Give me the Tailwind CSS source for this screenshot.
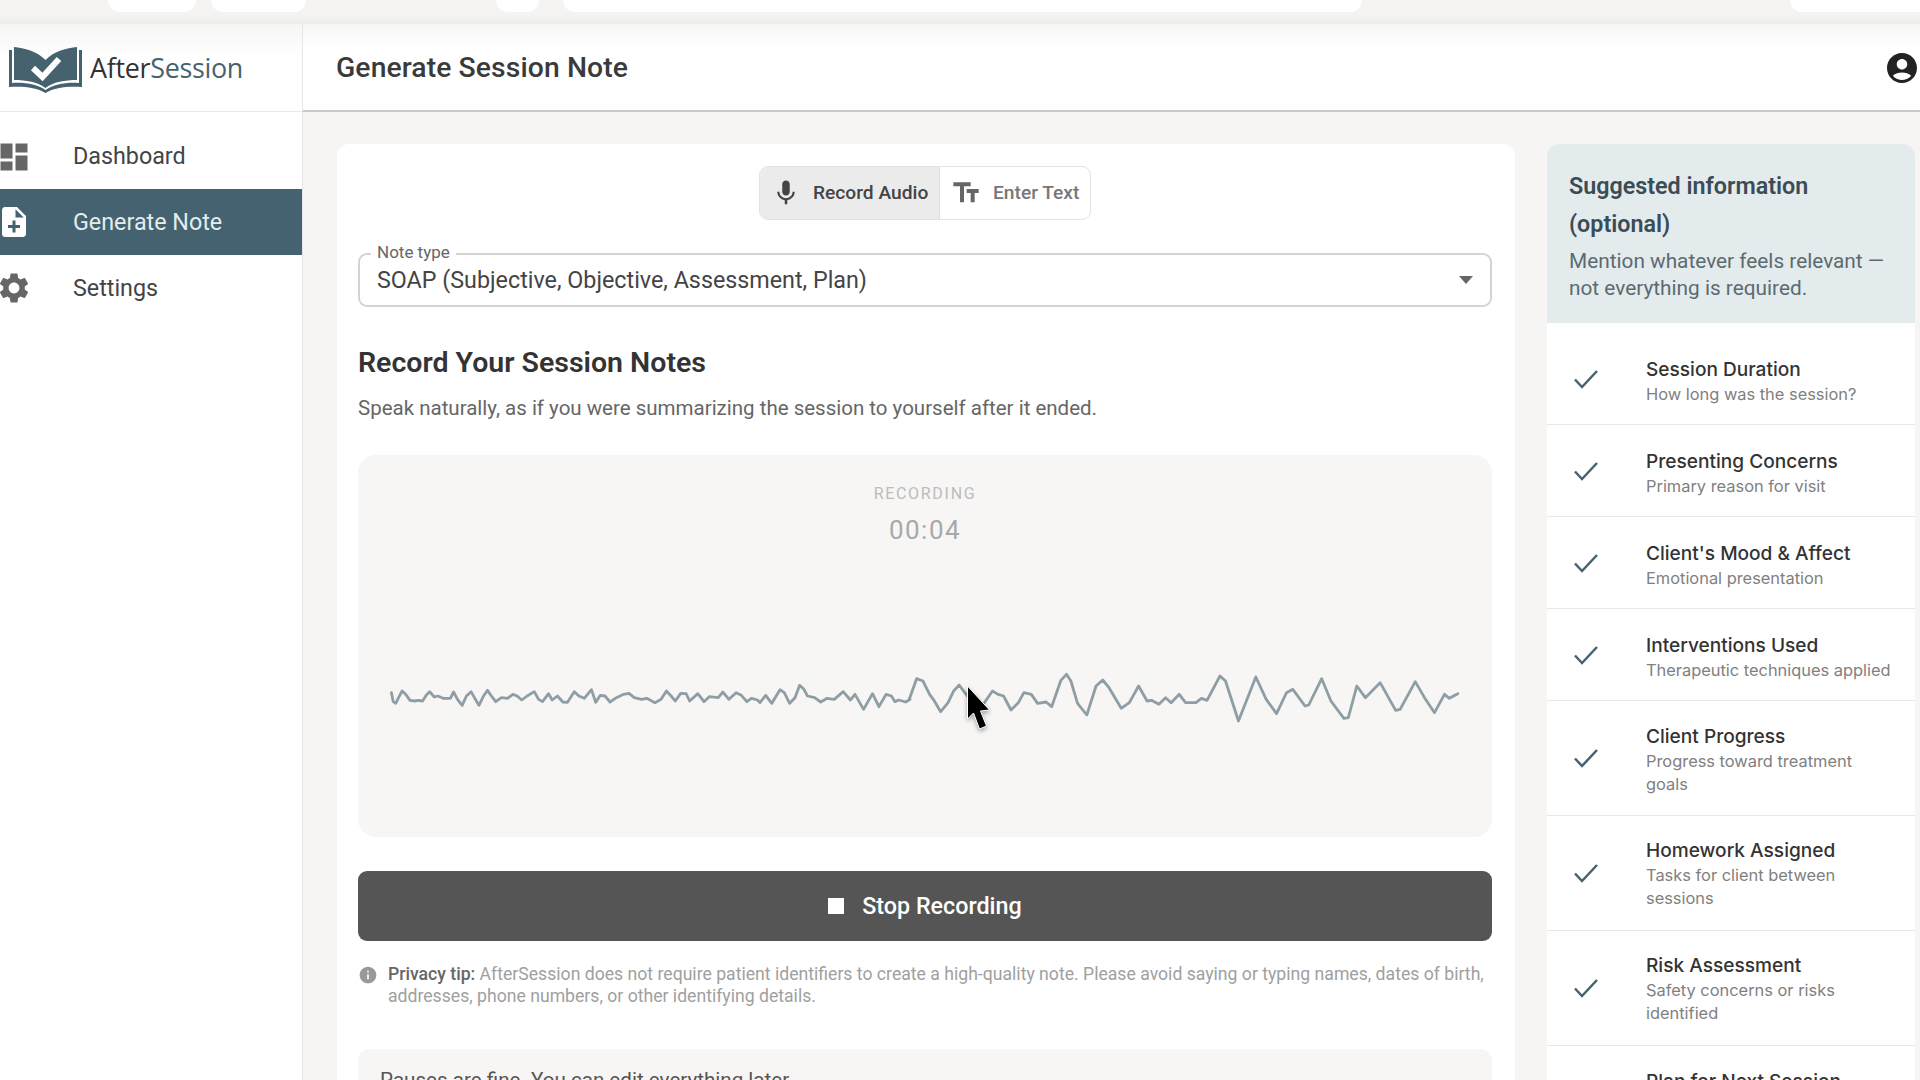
<!DOCTYPE html>
<html lang="en">
<head>
    <meta charset="UTF-8">
    <title>AfterSession - Generate Session Note</title>
    <script src="https://cdn.jsdelivr.net/npm/@tailwindcss/browser@4"></script>
</head>
<body class="h-screen overflow-hidden bg-[#f6f5f3] font-['Roboto',sans-serif] text-[#333]">

    <!-- Strip of the window above the app -->
    <div class="h-[24px] flex items-start bg-[#f5f4f2] shadow-[inset_0_-10px_10px_-8px_#e8e8e8]">
        <div class="ml-[108px] w-[88px] h-[12px] bg-white rounded-b-[14px]"></div>
        <div class="ml-[15px] w-[95px] h-[12px] bg-white rounded-b-[14px]"></div>
        <div class="ml-[190px] w-[43px] h-[12px] bg-white rounded-b-[20px]"></div>
        <div class="ml-[24px] w-[799px] h-[12px] bg-white rounded-b-[14px]"></div>
        <div class="ml-[428px] w-[130px] h-[12px] bg-white rounded-bl-[14px]"></div>
    </div>

    <div class="flex h-[1056px]">
        <!-- Sidebar -->
        <aside class="w-[303px] shrink-0 bg-white border-r border-[#e6e6e6]">
            <div class="h-[88px] flex items-center pl-[9px] border-b border-[#e8e8e8] bg-linear-to-b from-[#f6f6f5] to-white to-40%">
                <svg viewBox="0 0 73 47" class="w-[73px] h-[47px] shrink-0 mt-[3px]">
                    <path fill="#46626f" d="M5 1C15 2 28 5 36.500 14C45 5 58 2 68 1V34C56 34 44 36 36.500 42C29 36 17 34 5 34Z"/>
                    <path fill="#46626f" d="M0 4H3V37C15 36 28 38 36.500 44C45 38 58 36 70 37V4H73V41C60 40 46 41 36.500 47C27 41 13 40 0 41Z"/>
                    <path fill="none" stroke="#fff" stroke-width="6" d="M24 22L33.500 31L50 13"/>
                </svg>
                <span class="ml-[8px] mt-[2px] text-[26.900px] font-['Open_Sans',sans-serif] tracking-[-0.3px] text-[#333]">After<span class="text-[#46626f]">Session</span></span>
            </div>
            <nav class="pt-[11px]">
                <a class="h-[66px] flex items-center text-[23.300px] text-[#444] pt-[1px]">
                    <svg viewBox="0 0 24 24" class="w-[36px] h-[36px] -ml-[4px] fill-[#666]"><path d="M3 13h8V3H3v10zm0 8h8v-6H3v6zm10 0h8V11h-8v10zm0-18v6h8V3h-8z"/></svg>
                    <span class="ml-[41px]">Dashboard</span>
                </a>
                <a class="h-[66px] flex items-center text-[23.300px] bg-[#44626f] text-[#e3ecee]">
                    <svg viewBox="0 0 24 24" class="w-[36px] h-[36px] -ml-[4px] fill-white"><path d="M14 2H6c-1.100 0-1.990.9-1.990 2L4 20c0 1.100.89 2 1.990 2H18c1.100 0 2-.9 2-2V8l-6-6zm2 14h-3v3h-2v-3H8v-2h3v-3h2v3h3v2zm-3-7V3.500L18.500 9H13z"/></svg>
                    <span class="ml-[41px]">Generate Note</span>
                </a>
                <a class="h-[66px] flex items-center text-[23.300px] text-[#444]">
                    <svg viewBox="0 0 24 24" class="w-[36px] h-[36px] -ml-[4px] fill-[#666]"><path d="M19.140 12.940c.04-.3.06-.61.06-.94 0-.32-.02-.64-.07-.94l2.030-1.580c.18-.14.23-.41.12-.61l-1.920-3.320c-.12-.22-.37-.29-.59-.22l-2.390.96c-.5-.38-1.030-.7-1.620-.94l-.36-2.540c-.04-.24-.24-.41-.48-.41h-3.840c-.24 0-.43.17-.47.41l-.36 2.540c-.59.24-1.130.57-1.620.94l-2.390-.96c-.22-.08-.47 0-.59.22L2.740 8.870c-.12.21-.08.47.12.61l2.030 1.580c-.05.3-.09.63-.09.94s.02.64.07.94l-2.030 1.580c-.18.14-.23.41-.12.61l1.920 3.320c.12.22.37.29.59.22l2.390-.96c.5.38 1.030.7 1.620.94l.36 2.540c.05.24.24.41.48.41h3.840c.24 0 .44-.17.47-.41l.36-2.540c.59-.24 1.130-.56 1.620-.94l2.390.96c.22.08.47 0 .59-.22l1.920-3.320c.12-.22.07-.47-.12-.61l-2.010-1.580zM12 15.600c-1.980 0-3.600-1.620-3.600-3.600s1.620-3.600 3.600-3.600 3.600 1.620 3.600 3.600-1.620 3.600-3.600 3.600z"/></svg>
                    <span class="ml-[41px]">Settings</span>
                </a>
            </nav>
        </aside>

        <div class="flex-1 min-w-0 flex flex-col">
            <!-- Header -->
            <header class="h-[88px] shrink-0 flex items-center justify-between pl-[33px] pr-0 pt-[2px] border-b-2 border-[#c9c9c9] bg-linear-to-b from-[#f6f6f5] to-white to-30%">
                <h1 class="text-[28.300px] font-medium text-[#3a3a3a] tracking-[0.1px]">Generate Session Note</h1>
                <svg viewBox="0 0 24 24" class="w-[36px] h-[36px] fill-[#222]"><path d="M12 2C6.480 2 2 6.480 2 12s4.480 10 10 10 10-4.480 10-10S17.520 2 12 2zm0 4c1.930 0 3.500 1.570 3.500 3.500S13.930 13 12 13s-3.500-1.570-3.500-3.500S10.070 6 12 6zm0 14c-2.030 0-4.430-.82-6.140-2.880C7.550 15.800 9.680 15 12 15s4.450.8 6.140 2.120C16.430 19.180 14.030 20 12 20z"/></svg>
            </header>

            <main class="flex-1 overflow-hidden flex items-start gap-[32px] pl-[34px] pr-[3px] pt-[32px]">
                <!-- Recording card -->
                <section class="w-[1178px] shrink-0 bg-white rounded-t-[12px] pl-[21px] pr-[23px] pt-[22px] pb-[40px]">
                    <div class="flex justify-center">
                        <div class="flex h-[54px] border border-[#e2e2e2] rounded-[9px] overflow-hidden">
                            <button class="w-[180px] flex items-center bg-[#ebebeb] border-r border-[#dcdcdc] pl-[11px] text-[19.200px] font-medium text-[#444]">
                                <svg viewBox="0 0 24 24" class="w-[30px] h-[30px] fill-[#444]"><path d="M12 14c1.660 0 2.990-1.340 2.990-3L15 5c0-1.660-1.340-3-3-3S9 3.340 9 5v6c0 1.660 1.340 3 3 3zm5.300-3c0 3-2.540 5.100-5.300 5.100S6.700 14 6.700 11H5c0 3.410 2.720 6.230 6 6.720V21h2v-3.280c3.280-.48 6-3.300 6-6.720h-1.700z"/></svg>
                                <span class="ml-[12px]">Record Audio</span>
                            </button>
                            <button class="w-[150px] flex items-center pl-[10px] text-[19.200px] font-medium text-[#777]">
                                <svg viewBox="0 0 24 24" class="w-[32px] h-[32px] fill-[#666]"><path d="M2.500 4v3h5v12h3V7h5V4h-13zm19 5h-9v3h3v7h3v-7h3V9z"/></svg>
                                <span class="ml-[11px]">Enter Text</span>
                            </button>
                        </div>
                    </div>

                    <div class="relative mt-[33px] h-[54px] border-2 border-[#d4d4d4] rounded-[9px] flex items-center justify-between pl-[17px] pr-[17px] text-[23.300px] text-[#444]">
                        <span class="absolute left-[11px] -top-[12px] px-[6px] bg-white text-[17px] leading-[18px] text-[#666]">Note type</span>
                        <span>SOAP (Subjective, Objective, Assessment, Plan)</span>
                        <svg viewBox="0 0 14 8" class="w-[14px] h-[8px] fill-[#666]"><path d="M0 0h14L7 8z"/></svg>
                    </div>

                    <h2 class="mt-[38px] text-[28.500px] leading-[36px] font-semibold text-[#333]">Record Your Session Notes</h2>
                    <p class="mt-[13px] text-[20.500px] leading-[28px] text-[#666]">Speak naturally, as if you were summarizing the session to yourself after it ended.</p>

                    <!-- Waveform panel -->
                    <div class="relative mt-[33px] h-[382px] bg-[#f7f6f5] rounded-[18px] pt-[29px] text-center">
                        <div class="text-[16px] leading-[20px] tracking-[1.700px] text-[#bcbcbc]">RECORDING</div>
                        <div class="mt-[10px] text-[26px] leading-[32px] tracking-[1.500px] text-[#a8a8a8]">00:04</div>
                        <svg viewBox="358 454 1134 382" class="absolute inset-0 w-full h-full" fill="none" stroke="#8f9da4" stroke-width="2.800" stroke-linejoin="round" stroke-linecap="round">
                            <polyline vector-effect="non-scaling-stroke" transform="translate(370 640) scale(.35714 .33333)" points="60,155 65,182 72,187 80,170 90,150 100,160 112,178 125,180 135,178 147,180 158,162 167,152 180,168 190,165 205,172 225,172 234,153 245,175 258,193 270,165 283,152 295,175 305,193 318,165 329,148 340,165 352,182 368,170 385,172 400,160 412,165 425,177 440,165 460,152 472,175 483,182 500,158 510,177 525,165 540,183 553,184 572,152 585,165 600,172 620,146 632,184 645,163 658,165 672,183 690,170 710,160 725,157 740,170 760,175 775,172 798,185 815,175 830,150 843,165 855,180 870,157 885,158 895,180 918,158 935,182 950,167 975,170 988,153 1005,175 1025,155 1040,163 1055,182 1068,172 1085,177 1092,185 1108,163 1125,187 1148,146 1160,155 1175,187 1190,170 1203,133 1215,145 1225,165 1245,170 1262,183 1280,172 1300,175 1325,152 1345,177 1358,160 1382,205 1407,158 1425,197 1445,160 1460,165 1470,182 1480,177 1500,183 1512,175"/>
                            <polyline vector-effect="non-scaling-stroke" transform="translate(900 640) scale(.36990 .33333)" points="25,175 45,113 62,120 80,160 90,175 110,212 130,185 145,150 160,132 175,155 200,190 225,190 250,150 265,160 280,165 300,207 320,185 335,155 355,160 372,187 395,183 410,197 435,118 450,100 462,120 480,187 505,222 530,135 548,117 565,140 598,202 620,185 645,135 668,180 680,178 700,190 718,170 733,185 755,160 772,185 800,185 815,172 830,178 865,105 880,120 915,240 962,108 990,175 1018,218 1045,155 1062,145 1095,195 1105,192 1140,113 1165,180 1200,232 1212,230 1235,135 1258,170 1298,125 1340,208 1352,205 1393,122 1418,170 1445,215 1472,160 1485,172 1508,158"/>
                        </svg>
                        <!-- Mouse pointer -->
                        <svg viewBox="0 0 24 46" class="absolute left-[608px] top-[230px] w-[25px] h-[46px] drop-shadow-[0_2px_2px_rgba(0,0,0,0.35)]">
                            <path fill="#000" stroke="#fff" stroke-width="1" d="M1 1L23 25L14 26L20 41L13 44L7 28L1 34Z"/>
                        </svg>
                    </div>

                    <button class="mt-[34px] w-full h-[70px] bg-[#555] rounded-[9px] flex items-center justify-center text-[23.300px] font-medium text-white">
                        <span class="w-[16px] h-[16px] bg-white"></span>
                        <span class="ml-[18px]">Stop Recording</span>
                    </button>

                    <div class="mt-[22px] flex items-start">
                        <svg viewBox="0 0 24 24" class="w-[20px] h-[20px] mt-[2px] shrink-0 fill-[#999]"><path d="M12 2C6.480 2 2 6.480 2 12s4.480 10 10 10 10-4.480 10-10S17.520 2 12 2zm1 15h-2v-6h2v6zm0-8h-2V7h2v2z"/></svg>
                        <p class="ml-[10px] text-[17.640px] leading-[22px] text-[#a0a0a0]"><span class="font-medium text-[#666]">Privacy tip:</span> AfterSession does not require patient identifiers to create a high-quality note. Please avoid saying or typing names, dates of birth, addresses, phone numbers, or other identifying details.</p>
                    </div>

                    <div class="mt-[42px] bg-[#f7f6f5] rounded-[12px] px-[22px] py-[16px] text-[20.600px] text-[#555]">Pauses are fine. You can edit everything later.</div>
                </section>

                <!-- Suggested information -->
                <aside class="w-[368px] shrink-0 rounded-t-[12px] overflow-hidden bg-white font-['Inter',sans-serif]">
                    <div class="h-[179px] bg-[#e3ebed] pl-[22px] pr-[20px] pt-[23px]">
                        <h3 class="text-[23.300px] leading-[38px] font-semibold text-[#3c4c55] font-['Roboto',sans-serif]">Suggested information (optional)</h3>
                        <p class="mt-[5px] text-[20.800px] leading-[27px] text-[#5c6a71] font-['Roboto',sans-serif]">Mention whatever feels relevant — not everything is required.</p>
                    </div>
                    <ul class="pt-[10px]">
                        <li class="h-[92px] flex items-center border-b border-[#e8e8e8] pl-[27px]">
                            <svg viewBox="0 0 24 20" class="w-[24px] h-[20px] shrink-0 fill-none stroke-[#46626f] stroke-[2.500px]"><path d="M1 10.500L8 18L23 2"/></svg>
                            <div class="ml-[48px] w-[248px] pt-[4px]">
                                <div class="text-[19.100px] leading-[28px] font-medium text-[#333]">Session Duration</div>
                                <div class="text-[16.400px] leading-[23px] text-[#808080]">How long was the session?</div>
                            </div>
                        </li>
                        <li class="h-[92px] flex items-center border-b border-[#e8e8e8] pl-[27px]">
                            <svg viewBox="0 0 24 20" class="w-[24px] h-[20px] shrink-0 fill-none stroke-[#46626f] stroke-[2.500px]"><path d="M1 10.500L8 18L23 2"/></svg>
                            <div class="ml-[48px] w-[248px] pt-[3px]">
                                <div class="text-[19.100px] leading-[28px] font-medium text-[#333]">Presenting Concerns</div>
                                <div class="text-[16.400px] leading-[23px] text-[#808080]">Primary reason for visit</div>
                            </div>
                        </li>
                        <li class="h-[92px] flex items-center border-b border-[#e8e8e8] pl-[27px]">
                            <svg viewBox="0 0 24 20" class="w-[24px] h-[20px] shrink-0 fill-none stroke-[#46626f] stroke-[2.500px]"><path d="M1 10.500L8 18L23 2"/></svg>
                            <div class="ml-[48px] w-[248px] pt-[3px]">
                                <div class="text-[19.100px] leading-[28px] font-medium text-[#333]">Client's Mood &amp; Affect</div>
                                <div class="text-[16.400px] leading-[23px] text-[#808080]">Emotional presentation</div>
                            </div>
                        </li>
                        <li class="h-[92px] flex items-center border-b border-[#e8e8e8] pl-[27px]">
                            <svg viewBox="0 0 24 20" class="w-[24px] h-[20px] shrink-0 fill-none stroke-[#46626f] stroke-[2.500px]"><path d="M1 10.500L8 18L23 2"/></svg>
                            <div class="ml-[48px] w-[248px] pt-[3px]">
                                <div class="text-[19.100px] leading-[28px] font-medium text-[#333]">Interventions Used</div>
                                <div class="text-[16.400px] leading-[23px] text-[#808080]">Therapeutic techniques applied</div>
                            </div>
                        </li>
                        <li class="h-[115px] flex items-center border-b border-[#e8e8e8] pl-[27px]">
                            <svg viewBox="0 0 24 20" class="w-[24px] h-[20px] shrink-0 fill-none stroke-[#46626f] stroke-[2.500px]"><path d="M1 10.500L8 18L23 2"/></svg>
                            <div class="ml-[48px] w-[248px] pt-[2px]">
                                <div class="text-[19.100px] leading-[28px] font-medium text-[#333]">Client Progress</div>
                                <div class="text-[16.400px] leading-[23px] text-[#808080]">Progress toward treatment goals</div>
                            </div>
                        </li>
                        <li class="h-[115px] flex items-center border-b border-[#e8e8e8] pl-[27px]">
                            <svg viewBox="0 0 24 20" class="w-[24px] h-[20px] shrink-0 fill-none stroke-[#46626f] stroke-[2.500px]"><path d="M1 10.500L8 18L23 2"/></svg>
                            <div class="ml-[48px] w-[248px]">
                                <div class="text-[19.100px] leading-[28px] font-medium text-[#333]">Homework Assigned</div>
                                <div class="text-[16.400px] leading-[23px] text-[#808080]">Tasks for client between sessions</div>
                            </div>
                        </li>
                        <li class="h-[115px] flex items-center border-b border-[#e8e8e8] pl-[27px]">
                            <svg viewBox="0 0 24 20" class="w-[24px] h-[20px] shrink-0 fill-none stroke-[#46626f] stroke-[2.500px]"><path d="M1 10.500L8 18L23 2"/></svg>
                            <div class="ml-[48px] w-[248px]">
                                <div class="text-[19.100px] leading-[28px] font-medium text-[#333]">Risk Assessment</div>
                                <div class="text-[16.400px] leading-[23px] text-[#808080]">Safety concerns or risks identified</div>
                            </div>
                        </li>
                        <li class="h-[92px] flex items-center pl-[27px]">
                            <svg viewBox="0 0 24 20" class="w-[24px] h-[20px] shrink-0 fill-none stroke-[#46626f] stroke-[2.500px]"><path d="M1 10.500L8 18L23 2"/></svg>
                            <div class="ml-[48px] w-[248px]">
                                <div class="text-[19.100px] leading-[28px] font-medium text-[#333]">Plan for Next Session</div>
                                <div class="text-[16.400px] leading-[23px] text-[#808080]">Focus for the next visit</div>
                            </div>
                        </li>
                    </ul>
                </aside>
            </main>
        </div>
    </div>
</body>
</html>
